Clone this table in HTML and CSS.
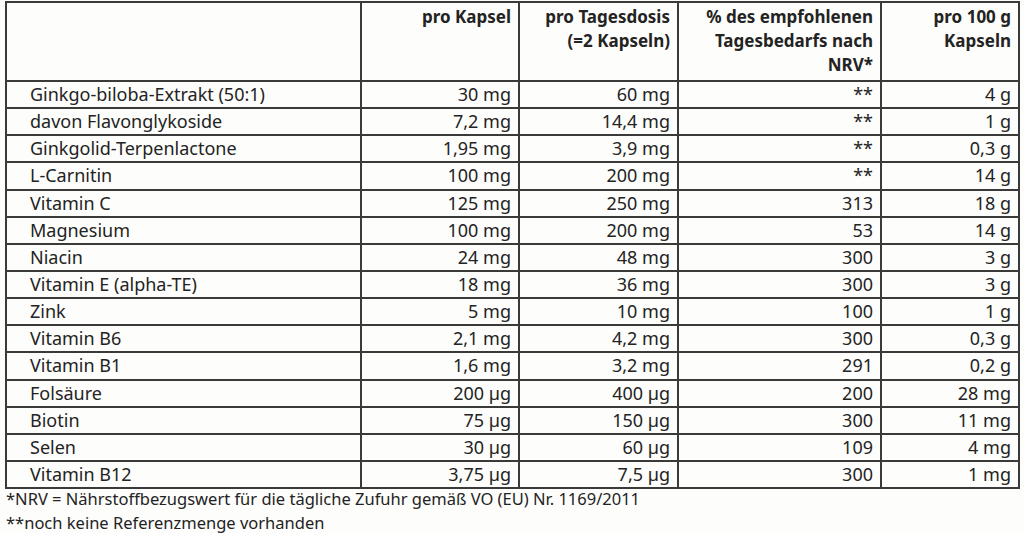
FILE: index.html
```html
<!DOCTYPE html>
<html lang="de">
<head>
<meta charset="utf-8">
<title>Nährwerte</title>
<link rel="stylesheet" href="styles.css">
</head>
<body>
<div class="page">
<table class="nut">
<colgroup>
<col class="c1"><col class="c2"><col class="c3"><col class="c4"><col class="c5">
</colgroup>
<thead>
<tr>
<th></th>
<th>pro Kapsel</th>
<th>pro Tagesdosis<br>(=2 Kapseln)</th>
<th>% des empfohlenen<br>Tagesbedarfs nach<br>NRV*</th>
<th>pro 100 g<br>Kapseln</th>
</tr>
</thead>
<tbody>
<tr><td>Ginkgo-biloba-Extrakt (50:1)</td><td>30 mg</td><td>60 mg</td><td>**</td><td>4 g</td></tr>
<tr><td>davon Flavonglykoside</td><td>7,2 mg</td><td>14,4 mg</td><td>**</td><td>1 g</td></tr>
<tr><td>Ginkgolid-Terpenlactone</td><td>1,95 mg</td><td>3,9 mg</td><td>**</td><td>0,3 g</td></tr>
<tr><td>L-Carnitin</td><td>100 mg</td><td>200 mg</td><td>**</td><td>14 g</td></tr>
<tr><td>Vitamin C</td><td>125 mg</td><td>250 mg</td><td>313</td><td>18 g</td></tr>
<tr><td>Magnesium</td><td>100 mg</td><td>200 mg</td><td>53</td><td>14 g</td></tr>
<tr><td>Niacin</td><td>24 mg</td><td>48 mg</td><td>300</td><td>3 g</td></tr>
<tr><td>Vitamin E (alpha-TE)</td><td>18 mg</td><td>36 mg</td><td>300</td><td>3 g</td></tr>
<tr><td>Zink</td><td>5 mg</td><td>10 mg</td><td>100</td><td>1 g</td></tr>
<tr><td>Vitamin B6</td><td>2,1 mg</td><td>4,2 mg</td><td>300</td><td>0,3 g</td></tr>
<tr><td>Vitamin B1</td><td>1,6 mg</td><td>3,2 mg</td><td>291</td><td>0,2 g</td></tr>
<tr><td>Folsäure</td><td>200 µg</td><td>400 µg</td><td>200</td><td>28 mg</td></tr>
<tr><td>Biotin</td><td>75 µg</td><td>150 µg</td><td>300</td><td>11 mg</td></tr>
<tr><td>Selen</td><td>30 µg</td><td>60 µg</td><td>109</td><td>4 mg</td></tr>
<tr><td>Vitamin B12</td><td>3,75 µg</td><td>7,5 µg</td><td>300</td><td>1 mg</td></tr>
</tbody>
</table>
<div class="notes">
<p class="note">*NRV = Nährstoffbezugswert für die tägliche Zufuhr gemäß VO (EU) Nr. 1169/2011</p>
<p class="note">**noch keine Referenzmenge vorhanden</p>
</div>
</div>
</body>
</html>
```
FILE: styles.css
```css
html, body {
  margin: 0;
  padding: 0;
  background: #fdfdfb;
}
body {
  font-family: "Noto Sans", "Open Sans", sans-serif;
  color: #232323;
  font-size: 18px;
}
.page {
  padding: 1px 0 0 5px;
}
.nut {
  border-collapse: collapse;
  table-layout: fixed;
  width: 1015px;
}
.c1 { width: 355px; }
.c2 { width: 158px; }
.c3 { width: 159px; }
.c4 { width: 203px; }
.c5 { width: 138px; }
.nut th, .nut td {
  border: 2px solid #3a3a3a;
  padding: 0 7px 0 8px;
  text-align: right;
  white-space: nowrap;
}
.nut th {
  height: 75px;
  vertical-align: top;
  font-weight: bold;
  font-size: 17px;
  line-height: 24px;
  padding-top: 2px;
  padding-bottom: 0;
}
.nut td {
  height: 25.15px;
  line-height: 25px;
  padding-top: 0;
  padding-bottom: 0;
  vertical-align: middle;
}
.nut td:first-child {
  text-align: left;
  padding-left: 23px;
}
.notes {
  margin-top: -2px;
  padding-left: 1px;
  font-size: 16.5px;
  line-height: 24px;
}
.note {
  margin: 0;
}
```
